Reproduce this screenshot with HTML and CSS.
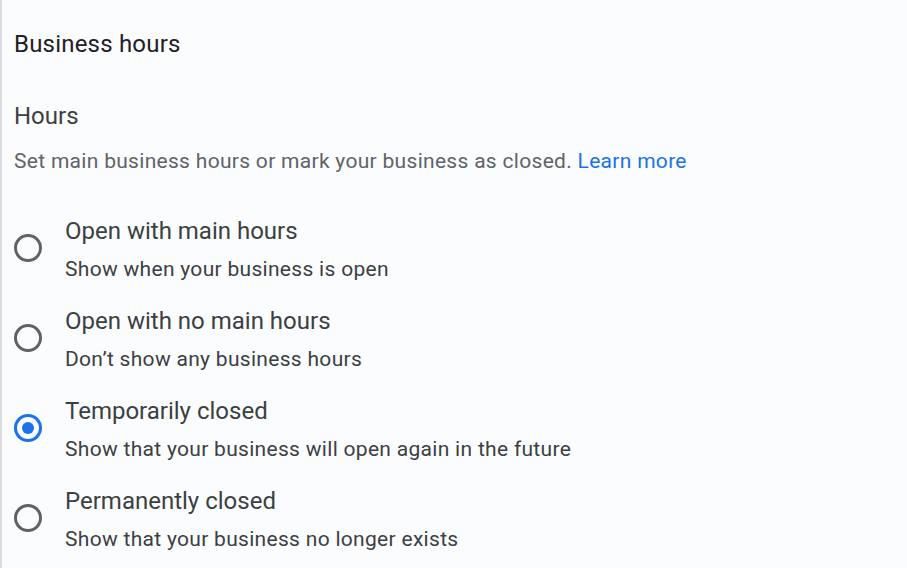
FILE: index.html
```html
<!DOCTYPE html>
<html>
<head>
<meta charset="utf-8">
<link rel="stylesheet" href="styles.css">
</head>
<body>
<div class="panel">
  <h1 class="title">Business hours</h1>
  <h2 class="section">Hours</h2>
  <p class="desc">Set main business hours or mark your business as closed. <a class="link" href="#">Learn more</a></p>
  <div class="options">
    <label class="option">
      <span class="radio"></span>
      <span class="text"><span class="label">Open with main hours</span><span class="sub">Show when your business is open</span></span>
    </label>
    <label class="option">
      <span class="radio"></span>
      <span class="text"><span class="label">Open with no main hours</span><span class="sub">Don’t show any business hours</span></span>
    </label>
    <label class="option">
      <span class="radio checked"></span>
      <span class="text"><span class="label">Temporarily closed</span><span class="sub">Show that your business will open again in the future</span></span>
    </label>
    <label class="option">
      <span class="radio"></span>
      <span class="text"><span class="label">Permanently closed</span><span class="sub">Show that your business no longer exists</span></span>
    </label>
  </div>
</div>
</body>
</html>
```

FILE: styles.css
```css
html, body {
  margin: 0;
  padding: 0;
  height: 100%;
}
body {
  background: #fbfcfe;
  font-family: Roboto, "Liberation Sans", sans-serif;
  overflow: hidden;
}
.panel {
  border-left: 2px solid #dadce0;
  min-height: 100%;
  box-sizing: border-box;
  padding: 30px 0 0 12px;
}
.title {
  margin: 0;
  font-size: 24px;
  font-weight: 400;
  color: #202124;
  line-height: 28px;
  letter-spacing: 0.2px;
}
.section {
  margin: 44px 0 0 0;
  font-size: 24px;
  font-weight: 400;
  color: #3c4043;
  line-height: 28px;
}
.desc {
  margin: 19px 0 0 0;
  font-size: 21px;
  color: #5f6368;
  line-height: 24px;
  letter-spacing: 0.3px;
}
.link {
  color: #1a73e8;
  text-decoration: none;
}
.options {
  margin-top: 44px;
  display: flex;
  flex-direction: column;
  gap: 24px;
}
.option {
  display: flex;
  align-items: center;
  gap: 23px;
}
.radio {
  width: 22px;
  height: 22px;
  border: 3px solid #5f6368;
  border-radius: 50%;
  flex: none;
  position: relative;
  margin-top: -4px;
}
.radio.checked {
  border-color: #1a73e8;
}
.radio.checked::after {
  content: "";
  position: absolute;
  left: 5px;
  top: 5px;
  width: 12px;
  height: 12px;
  border-radius: 50%;
  background: #1a73e8;
}
.text {
  display: flex;
  flex-direction: column;
}
.label {
  font-size: 24px;
  color: #3c4043;
  line-height: 28px;
}
.sub {
  margin-top: 10px;
  font-size: 21px;
  color: #3c4043;
  line-height: 28px;
  letter-spacing: 0.3px;
}
```
